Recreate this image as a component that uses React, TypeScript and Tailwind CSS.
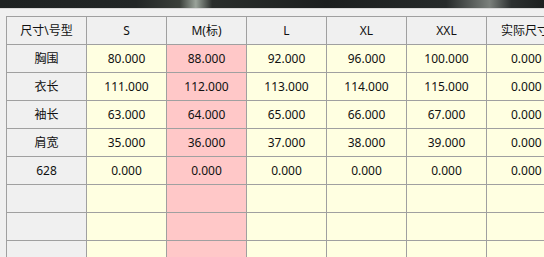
import React from "react";

const sizes = ["S", "M(标)", "L", "XL", "XXL", "实际尺寸"];

const rows: { name: string; values: string[] }[] = [
  { name: "胸围", values: ["80.000", "88.000", "92.000", "96.000", "100.000", "0.000"] },
  { name: "衣长", values: ["111.000", "112.000", "113.000", "114.000", "115.000", "0.000"] },
  { name: "袖长", values: ["63.000", "64.000", "65.000", "66.000", "67.000", "0.000"] },
  { name: "肩宽", values: ["35.000", "36.000", "37.000", "38.000", "39.000", "0.000"] },
  { name: "628", values: ["0.000", "0.000", "0.000", "0.000", "0.000", "0.000"] },
  { name: "", values: ["", "", "", "", "", ""] },
  { name: "", values: ["", "", "", "", "", ""] },
  { name: "", values: ["", "", "", "", "", ""] },
];

const cell =
  "h-[28px] shrink-0 w-[80px] border-r border-b border-[#a0a0a0] flex items-center justify-center overflow-hidden whitespace-nowrap";

export default function App() {
  return (
    <div
      className="w-[544px] h-[257px] overflow-hidden bg-[#f0f0f0] text-[12px] text-[#111]"
      style={{ fontFamily: '"Noto Sans", "Noto Sans CJK SC", sans-serif' }}
    >
      {/* dark strip of the window behind */}
      <div className="h-[8px] bg-[linear-gradient(90deg,#1e2222_0%,#222626_25%,#3a3f3a_33%,#9aa39a_36%,#2a2e2c_39%,#1c1f1f_60%,#262a2a_82%,#7b807c_90%,#2c3030_94%,#1d2020_100%)]" />
      <div className="h-[1px] bg-[#d8d8d8]" />
      <div className="h-[7px]" />

      <div className="ml-[6px] border-l border-t border-[#a0a0a0] w-[600px]">
        {/* header */}
        <div className="flex">
          <div className={`${cell} bg-[#f0f0f0]`}>尺寸\号型</div>
          {sizes.map((s) => (
            <div key={s} className={`${cell} bg-[#f0f0f0] ${s === "实际尺寸" ? "justify-start pl-[14px]" : ""}`}>
              {s}
            </div>
          ))}
        </div>

        {rows.map((r, i) => (
          <div key={i} className="flex">
            <div className={`${cell} bg-[#f0f0f0]`}>{r.name}</div>
            {r.values.map((v, j) => (
              <div
                key={j}
                className={`${cell} ${j === 1 ? "bg-[#ffc8c8]" : "bg-[#ffffe1]"} ${
                  j === 5 ? "justify-start pl-[24px]" : ""
                }`}
              >
                {v}
              </div>
            ))}
          </div>
        ))}
      </div>
    </div>
  );
}
